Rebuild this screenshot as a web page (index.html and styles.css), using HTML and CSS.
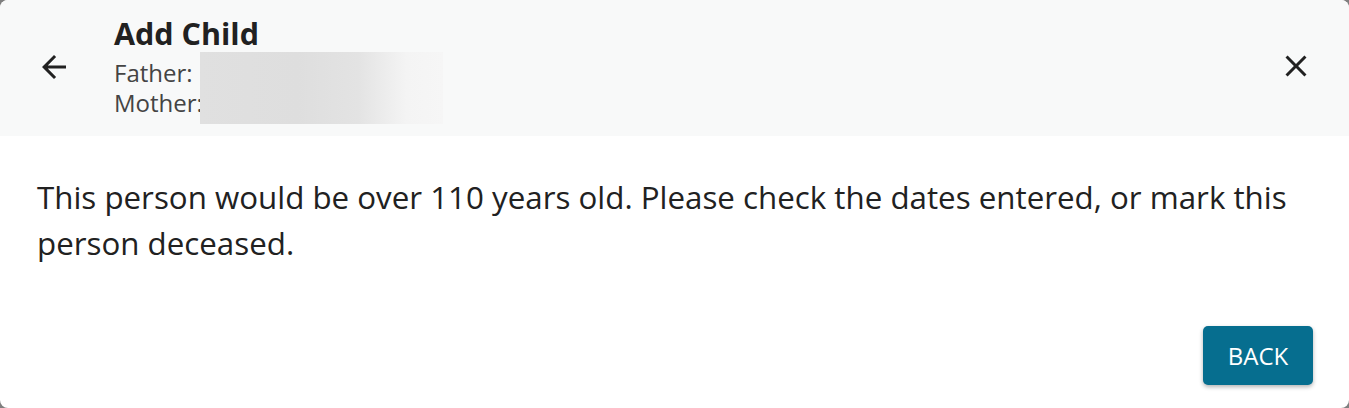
FILE: index.html
```html
<!DOCTYPE html>
<html lang="en">
<head>
<meta charset="utf-8">
<title>Add Child</title>
<link rel="stylesheet" href="styles.css">
</head>
<body>
<div class="dialog">
  <header class="dialog-header">
    <button class="icon-btn back" aria-label="Back">
      <svg viewBox="0 0 24 24" width="36" height="36"><path d="M20 11H7.83l5.59-5.59L12 4l-8 8 8 8 1.41-1.41L7.83 13H20v-2z"/></svg>
    </button>
    <div class="header-info">
      <h1 class="title">Add Child</h1>
      <div class="parent">Father:</div>
      <div class="parent">Mother:</div>
      <div class="redact"></div>
    </div>
    <button class="icon-btn close" aria-label="Close">
      <svg viewBox="0 0 24 24" width="36" height="36"><path d="M19 6.41L17.59 5 12 10.59 6.41 5 5 6.41 10.59 12 5 17.59 6.41 19 12 13.41 17.59 19 19 17.59 13.41 12z"/></svg>
    </button>
  </header>
  <main class="dialog-body">
    <p class="message">This person would be over 110 years old. Please check the dates entered, or mark this person deceased.</p>
  </main>
  <footer class="dialog-actions">
    <button class="btn-primary">BACK</button>
  </footer>
</div>
</body>
</html>
```
FILE: styles.css
```css
html, body {
  margin: 0;
  padding: 0;
  height: 100%;
}
body {
  background: #7f7f7f;
  font-family: "Open Sans", "Noto Sans", sans-serif;
  color: #212121;
}
.dialog {
  height: 408px;
  background: #ffffff;
  border-radius: 8px;
  overflow: hidden;
  display: flex;
  flex-direction: column;
}
.dialog-header {
  height: 136px;
  flex: none;
  box-sizing: border-box;
  background: #f8f9f9;
  display: flex;
  align-items: center;
  padding: 0 35px 0 36px;
}
.icon-btn {
  border: 0;
  background: transparent;
  padding: 0;
  width: 36px;
  height: 36px;
  display: flex;
  align-items: center;
  justify-content: center;
  cursor: pointer;
}
.icon-btn svg {
  fill: #212121;
  display: block;
}
.back {
  margin-top: -3px;
}
.close {
  margin-top: -5px;
  margin-left: auto;
}
.header-info {
  position: relative;
  margin-left: 42px;
  margin-top: -3px;
}
.title {
  margin: 0 0 7px;
  font-size: 30.5px;
  font-weight: 700;
  line-height: 36px;
  color: #212121;
}
.parent {
  font-size: 24px;
  line-height: 30px;
  color: #444444;
}
.redact {
  position: absolute;
  left: 86px;
  top: 37px;
  width: 243px;
  height: 72px;
  background: linear-gradient(90deg, #e0e0e0 0%, #dedede 40%, #e3e3e3 65%, #f4f4f4 85%, #f6f6f6 100%);
}
.dialog-body {
  padding: 0 36px 0 37px;
}
.message {
  margin: 38px 0 0;
  font-size: 31.3px;
  line-height: 46px;
  color: #212121;
}
.dialog-actions {
  margin-top: auto;
  display: flex;
  justify-content: flex-end;
  padding: 0 36px 23px 0;
}
.btn-primary {
  width: 110px;
  height: 59px;
  border: 0;
  border-radius: 5px;
  background: #066e8f;
  color: #ffffff;
  font-family: "Open Sans", "Noto Sans", sans-serif;
  font-size: 24px;
  box-shadow: 0 2px 4px rgba(0, 0, 0, 0.3);
  cursor: pointer;
}
```
